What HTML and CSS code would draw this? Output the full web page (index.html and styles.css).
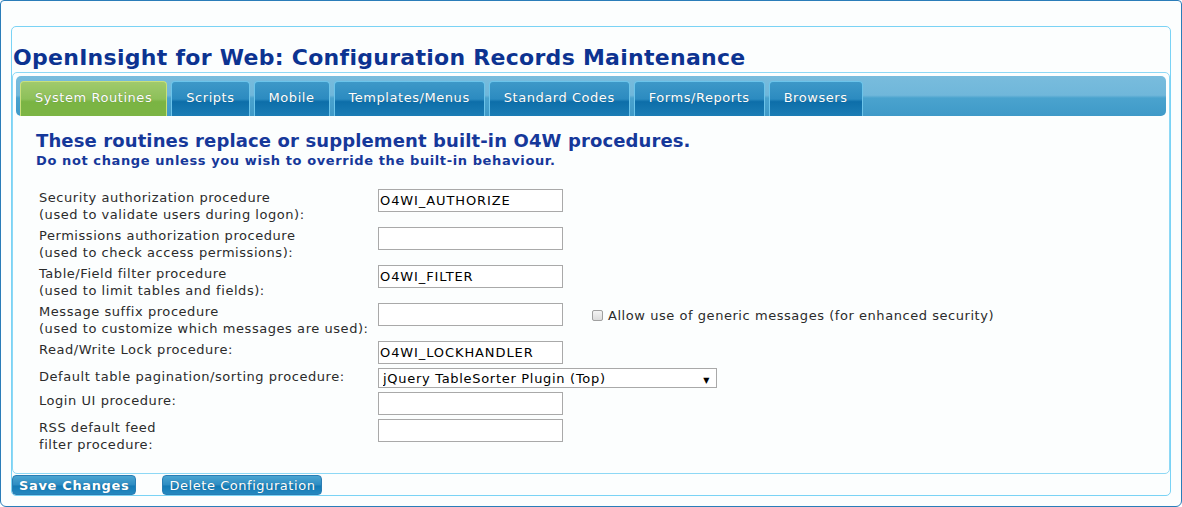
FILE: index.html
```html
<!DOCTYPE html>
<html>
<head>
    <meta charset="UTF-8">
    <title>OpenInsight for Web: Configuration Records Maintenance</title>
    <link rel="stylesheet" href="styles.css">
</head>
<body>
    <div class="frame">
        <div class="wrapper">
            <h1 class="page-title">OpenInsight for Web: Configuration Records Maintenance</h1>

            <div class="panel">
                <div class="tab-bar">
                    <div class="tab tab-active">System Routines</div>
                    <div class="tab">Scripts</div>
                    <div class="tab">Mobile</div>
                    <div class="tab">Templates/Menus</div>
                    <div class="tab">Standard Codes</div>
                    <div class="tab">Forms/Reports</div>
                    <div class="tab">Browsers</div>
                </div>

                <div class="content">
                    <h2 class="intro">These routines replace or supplement built-in O4W procedures.</h2>
                    <h3 class="intro-note">Do not change unless you wish to override the built-in behaviour.</h3>

                    <table class="routines">
                        <tr>
                            <td class="label">Security authorization procedure<br>(used to validate users during logon):</td>
                            <td><input type="text" class="field" value="O4WI_AUTHORIZE"></td>
                            <td></td>
                        </tr>
                        <tr>
                            <td class="label">Permissions authorization procedure<br>(used to check access permissions):</td>
                            <td><input type="text" class="field" value=""></td>
                            <td></td>
                        </tr>
                        <tr>
                            <td class="label">Table/Field filter procedure<br>(used to limit tables and fields):</td>
                            <td><input type="text" class="field" value="O4WI_FILTER"></td>
                            <td></td>
                        </tr>
                        <tr>
                            <td class="label">Message suffix procedure<br>(used to customize which messages are used):</td>
                            <td><input type="text" class="field" value=""></td>
                            <td class="extra">
                                <label><input type="checkbox" class="check">Allow use of generic messages (for enhanced security)</label>
                            </td>
                        </tr>
                        <tr>
                            <td class="label">Read/Write Lock procedure:</td>
                            <td><input type="text" class="field" value="O4WI_LOCKHANDLER"></td>
                            <td></td>
                        </tr>
                        <tr>
                            <td class="label">Default table pagination/sorting procedure:</td>
                            <td colspan="2">
                                <span class="select-wrap">
                                    <select class="picker">
                                        <option>jQuery TableSorter Plugin (Top)</option>
                                    </select>
                                </span>
                            </td>
                        </tr>
                        <tr>
                            <td class="label">Login UI procedure:</td>
                            <td><input type="text" class="field" value=""></td>
                            <td></td>
                        </tr>
                        <tr>
                            <td class="label">RSS default feed<br>filter procedure:</td>
                            <td><input type="text" class="field" value=""></td>
                            <td></td>
                        </tr>
                    </table>
                </div>
            </div>

            <div class="actions">
                <button class="btn btn-save">Save Changes</button>
                <button class="btn">Delete Configuration</button>
            </div>
        </div>
    </div>
</body>
</html>
```

FILE: styles.css
```css
body {
    margin: 0;
    font-family: 'DejaVu Sans', Verdana, sans-serif;
    font-size: 13px;
    letter-spacing: 0.55px;
    background-color: #ffffff;
}
.frame {
    box-sizing: border-box;
    width: 1182px;
    height: 507px;
    padding: 25px 10px 0 10px;
    border: 1px solid #2a7db9;
    border-radius: 4px 4px 6px 6px;
    background-color: #fcfefe;
}
.wrapper {
    border: 1px solid #7ad3f5;
    border-radius: 5px;
}
.page-title {
    margin: 0;
    padding: 17px 0 0 1px;
    font-size: 22px;
    line-height: 27px;
    font-weight: bold;
    letter-spacing: 0.28px;
    color: #0c3391;
}
.panel {
    margin-top: 1px;
    padding: 3px 3px 18px 3px;
    border: 1px solid #8dd8f5;
    border-radius: 5px;
}
.tab-bar {
    box-sizing: border-box;
    height: 40px;
    display: flex;
    align-items: flex-end;
    gap: 4px;
    padding: 0 4px;
    border-radius: 5px;
    background: linear-gradient(#78bcdd, #70b7da 48%, #4aa3ce 55%, #3f9ac8);
}
.tab {
    box-sizing: border-box;
    height: 35px;
    padding: 0 14px 3px 14px;
    line-height: 31px;
    color: #ffffff;
    border: 1px solid #6cc4ea;
    border-bottom: none;
    border-radius: 4px 4px 0 0;
    background: linear-gradient(#3d98c8, #2c8bc0 50%, #0d6ea9 58%, #1b7db5);
    text-shadow: 0 0 1px rgba(0,0,0,0.35);
    white-space: nowrap;
}
.tab-active {
    border-color: #c8e07c;
    background: linear-gradient(#a0ca6c, #8dc05a 50%, #7ab443 58%, #7cb545);
}
.content {
    padding: 15px 0 0 20px;
}
.intro {
    margin: 0;
    font-size: 18px;
    line-height: 20px;
    letter-spacing: 0.12px;
    color: #16389a;
}
.intro-note {
    margin: 2px 0 0 0;
    font-size: 13px;
    line-height: 16px;
    letter-spacing: 0.6px;
    color: #16389a;
}
.routines {
    margin: 18px 0 0 1px;
    border-collapse: collapse;
}
.routines td {
    padding: 2px;
    vertical-align: top;
    line-height: 17px;
    color: #2b2b2b;
}
.routines .label {
    width: 335px;
}
.field {
    box-sizing: border-box;
    width: 185px;
    height: 23px;
    margin: 0;
    padding: 0 1px;
    border: 1px solid #a9a9a9;
    font-family: 'DejaVu Sans', Verdana, sans-serif;
    font-size: 13px;
    letter-spacing: 0.9px;
    color: #000000;
    background-color: #ffffff;
    display: block;
}
.routines .extra {
    padding: 6px 2px 2px 27px;
    white-space: nowrap;
}
.check {
    -webkit-appearance: none;
    appearance: none;
    box-sizing: border-box;
    width: 11px;
    height: 11px;
    margin: 0 5px 0 0;
    vertical-align: -1px;
    border: 1px solid #a0a0a0;
    border-radius: 2px;
    background: linear-gradient(#f4f4f4, #dcdcdc);
}
.select-wrap {
    position: relative;
    display: inline-block;
}
.select-wrap::after {
    content: "\25BC";
    position: absolute;
    right: 7px;
    top: 4px;
    font-size: 8px;
    color: #000000;
    pointer-events: none;
}
.picker {
    -webkit-appearance: none;
    appearance: none;
    box-sizing: border-box;
    width: 339px;
    height: 20px;
    margin: 0;
    padding: 0 4px;
    border: 1px solid #a9a9a9;
    border-radius: 0;
    font-family: 'DejaVu Sans', Verdana, sans-serif;
    font-size: 13px;
    letter-spacing: 0.7px;
    color: #000000;
    background-color: #ffffff;
    display: block;
}
.actions {
    display: flex;
    gap: 26px;
    margin-top: 1px;
}
.btn {
    box-sizing: border-box;
    height: 20px;
    padding: 0 6px;
    border: 1px solid #2a7db3;
    border-radius: 4px;
    font-family: 'DejaVu Sans', Verdana, sans-serif;
    font-size: 13px;
    line-height: 17px;
    letter-spacing: 0.55px;
    color: #ffffff;
    background: linear-gradient(#4aa5d2, #2d8cc2 50%, #137ab5 55%, #2488c0);
    text-shadow: 0 0 1px rgba(0,0,0,0.3);
}
.btn-save {
    font-weight: bold;
    letter-spacing: 0.65px;
}
```
